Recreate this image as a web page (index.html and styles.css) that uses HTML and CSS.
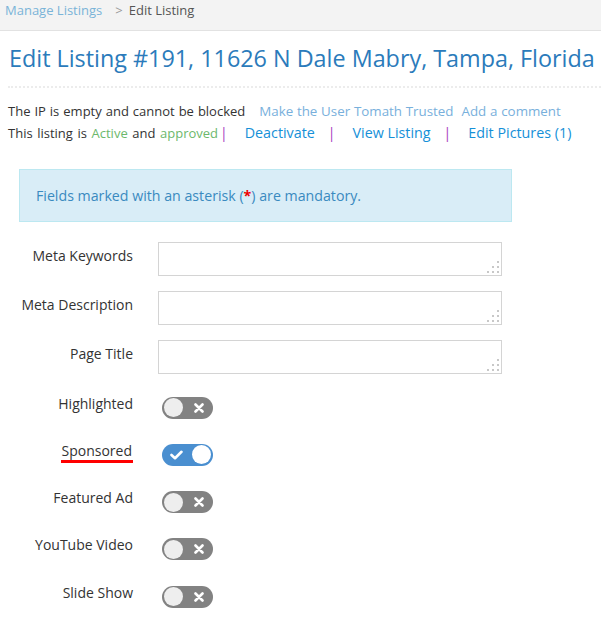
FILE: index.html
```html
<!DOCTYPE html>
<html>
<head>
<meta charset="utf-8">
<link rel="stylesheet" href="styles.css">
</head>
<body>
<div class="crumbs"><a class="crumb-link">Manage Listings</a><span class="sep">&gt;</span><span class="crumb-cur">Edit Listing</span></div>
<div class="page">
  <h1 class="title">Edit Listing #191, 11626 N Dale Mabry, Tampa, Florida</h1>
  <div class="meta">
    <div class="line1">The IP is empty and cannot be blocked <a class="soft">Make the User Tomath Trusted</a> <a class="soft">Add a comment</a></div>
    <div class="line2"><span class="status">This listing is <span class="green">Active</span> and <span class="green">approved</span></span><span class="pipe">|</span><a class="act">Deactivate</a><span class="pipe">|</span><a class="act">View Listing</a><span class="pipe">|</span><a class="act">Edit Pictures (1)</a></div>
  </div>
  <div class="info">Fields marked with an asterisk (<span class="ast">*</span>) are mandatory.</div>
  <div class="form">
    <div class="row"><label class="lbl">Meta Keywords</label><div class="ta"><svg class="grip" width="12" height="12" viewBox="0 0 12 12"><rect x="10" y="0" width="2" height="2"/><rect x="5" y="5" width="2" height="2"/><rect x="10" y="5" width="2" height="2"/><rect x="0" y="10" width="2" height="2"/><rect x="5" y="10" width="2" height="2"/><rect x="10" y="10" width="2" height="2"/></svg></div></div>
    <div class="row"><label class="lbl">Meta Description</label><div class="ta"><svg class="grip" width="12" height="12" viewBox="0 0 12 12"><rect x="10" y="0" width="2" height="2"/><rect x="5" y="5" width="2" height="2"/><rect x="10" y="5" width="2" height="2"/><rect x="0" y="10" width="2" height="2"/><rect x="5" y="10" width="2" height="2"/><rect x="10" y="10" width="2" height="2"/></svg></div></div>
    <div class="row"><label class="lbl">Page Title</label><div class="ta"><svg class="grip" width="12" height="12" viewBox="0 0 12 12"><rect x="10" y="0" width="2" height="2"/><rect x="5" y="5" width="2" height="2"/><rect x="10" y="5" width="2" height="2"/><rect x="0" y="10" width="2" height="2"/><rect x="5" y="10" width="2" height="2"/><rect x="10" y="10" width="2" height="2"/></svg></div></div>
    <div class="toggles">
      <div class="trow"><label class="lbl">Highlighted</label><div class="tg off"><span class="knob"></span><svg class="ic" width="10" height="10" viewBox="0 0 10 10"><path d="M1.5 1.5L8.5 8.5M8.5 1.5L1.5 8.5" stroke="#fff" stroke-width="2.6" stroke-linecap="round"/></svg></div></div>
      <div class="trow"><label class="lbl"><span class="red-ul">Sponsored</span></label><div class="tg on"><svg class="ic" width="13" height="10" viewBox="0 0 13 10"><path d="M1.5 5L5 8.2L11.5 1.8" stroke="#fff" stroke-width="2.6" fill="none" stroke-linecap="round" stroke-linejoin="round"/></svg><span class="knob"></span></div></div>
      <div class="trow"><label class="lbl">Featured Ad</label><div class="tg off"><span class="knob"></span><svg class="ic" width="10" height="10" viewBox="0 0 10 10"><path d="M1.5 1.5L8.5 8.5M8.5 1.5L1.5 8.5" stroke="#fff" stroke-width="2.6" stroke-linecap="round"/></svg></div></div>
      <div class="trow"><label class="lbl">YouTube Video</label><div class="tg off"><span class="knob"></span><svg class="ic" width="10" height="10" viewBox="0 0 10 10"><path d="M1.5 1.5L8.5 8.5M8.5 1.5L1.5 8.5" stroke="#fff" stroke-width="2.6" stroke-linecap="round"/></svg></div></div>
      <div class="trow"><label class="lbl">Slide Show</label><div class="tg off"><span class="knob"></span><svg class="ic" width="10" height="10" viewBox="0 0 10 10"><path d="M1.5 1.5L8.5 8.5M8.5 1.5L1.5 8.5" stroke="#fff" stroke-width="2.6" stroke-linecap="round"/></svg></div></div>
    </div>
  </div>
</div>
</body>
</html>
```
FILE: styles.css
```css
* { box-sizing: border-box; }
body { margin: 0; font-family: "Open Sans", "DejaVu Sans", sans-serif; color: #333; background: #fff; }
a { cursor: pointer; }
.crumbs { height: 31px; background: #f3f3f3; border-bottom: 1px solid #e2e2e2; padding: 1px 5px 0; font-size: 13px; line-height: 18px; }
.crumb-link { color: #7ab4d8; }
.sep { color: #999; margin: 0 6px 0 13px; }
.crumb-cur { color: #555; }
.page { padding: 0 0 0 8px; }
.title { margin: 0; padding: 11px 0 0 1px; font-size: 23.35px; font-weight: 400; color: #2b7bbb; line-height: 32px; height: 57px; border-bottom: 2px dotted #ececec; white-space: nowrap; }
.meta { padding-top: 12px; }
.line1 { font-size: 13px; line-height: 22px; color: #333; word-spacing: 0.6px; white-space: nowrap; }
.line1 .soft { color: #78b0dc; margin-left: 10px; font-size: 13.35px; word-spacing: 0.3px; }
.line1 .soft + .soft { margin-left: 4px; }
.line2 { font-size: 13px; line-height: 22px; white-space: nowrap; }
.status { word-spacing: 1.2px; }
.green { color: #6cb86c; }
.pipe { color: #a83cc0; margin: 0 17px 0 2px; font-size: 14px; }
.act { color: #1590d8; font-size: 14.3px; margin-right: 11px; }
.info { margin: 25px 0 0 11px; width: 493px; height: 53px; background: #d9edf7; border: 1px solid #bce8f1; color: #3a8ac0; font-size: 14.2px; padding: 0 16px; line-height: 51px; }
.ast { color: #e00; font-weight: 700; }
.form { padding-top: 20px; }
.row { display: flex; align-items: flex-start; margin-bottom: 15px; }
.lbl { width: 125px; text-align: right; font-size: 14px; color: #333; line-height: 20px; flex: none; }
.row .lbl { padding-top: 4px; }
.ta { margin-left: 25px; width: 344px; height: 34px; border: 1px solid #d4d4d4; position: relative; }
.grip { position: absolute; right: 2px; bottom: 2px; fill: #c8c8c8; }
.toggles { margin-top: -5px; }
.trow { display: flex; align-items: center; height: 47.25px; }
.trow .lbl { margin-top: -8px; }
.red-ul { border-bottom: 3px solid #f00; padding: 0 1px 0; }
.tg { margin-left: 29px; width: 51px; height: 22px; border-radius: 11px; display: flex; align-items: center; justify-content: space-between; padding: 0 2px; }
.tg.off { background: #828282; padding-right: 9px; }
.tg.on { background: #4a8fd0; padding-left: 8px; }
.knob { width: 19px; height: 19px; border-radius: 50%; background: #eeeeee; }
.tg.on .knob { background: #fff; }
.ic { display: block; }
```
